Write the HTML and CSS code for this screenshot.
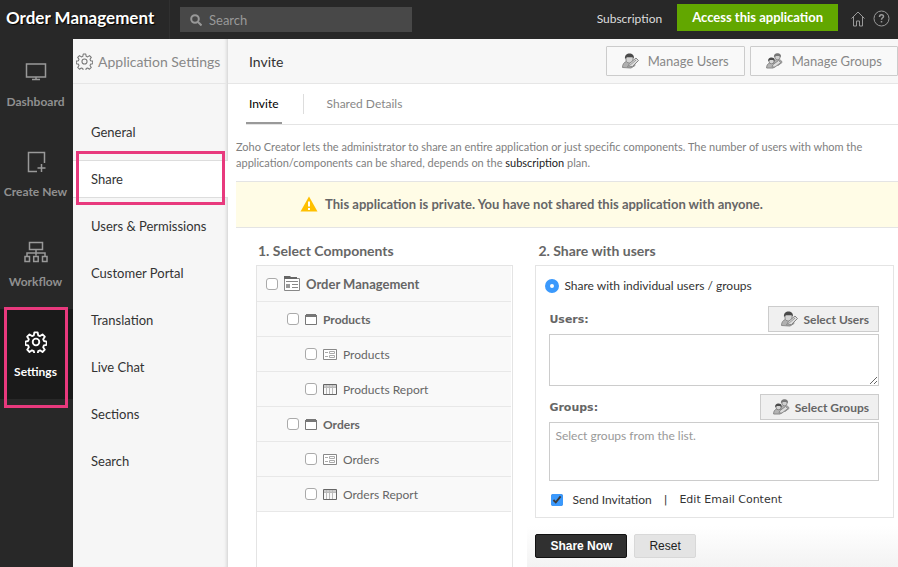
FILE: index.html
```html
<!DOCTYPE html>
<html lang="en">
<head>
<meta charset="utf-8">
<meta name="viewport" content="width=device-width, initial-scale=1">
<title>Order Management - Share</title>
<link rel="stylesheet" href="styles.css">
</head>
<body>
  <!-- icons used more than once -->
  <svg class="defs" aria-hidden="true">
    <symbol id="gear" viewBox="0 0 24 24">
      <circle cx="12" cy="12" r="3.6"/>
      <path d="M10.200 1.500h3.600l.6 3.200 2 .8 2.700-1.800 2.500 2.500-1.800 2.700.8 2 3 .6v3.600l-3 .6-.8 2 1.800 2.700-2.500 2.500-2.700-1.800-2 .8-.6 3h-3.600l-.6-3-2-.8-2.700 1.800-2.500-2.500 1.800-2.700-.8-2-3-.6v-3.600l3-.6.8-2-1.800-2.700 2.500-2.500 2.700 1.800 2-.8z" stroke-linejoin="round"/>
    </symbol>
    <symbol id="user" viewBox="0 0 17 16">
      <path d="M.5 14.500c0-3 1.500-5.500 4-6h5c2 .5 3.500 2 3.500 4l-4 2.500z" fill="#b0b0b0" stroke="#8c8c8c"/>
      <path d="M4 4h7v3c0 2-1.500 3-3.500 3S4 9 4 7z" fill="#d4d4d4" stroke="#8c8c8c"/>
      <path d="M3 6C2.500 2 5 .5 7.500.5S12.500 2 11.800 5.500L10.500 4H5z" fill="#4a4a4a"/>
      <path d="M5.500 14l2-3.500L14 5l2.500 2.500-6 6z" fill="#dcdcdc" stroke="#858585"/>
      <path d="M7 13l7-6" stroke="#999"/>
    </symbol>
    <symbol id="group" viewBox="0 0 17 16">
      <path d="M8 11c0-2.500 1-4.500 3-4.500s5 .5 5 3l-4 3z" fill="#b4b4b4" stroke="#909090"/>
      <circle cx="11.500" cy="4.200" r="2.600" fill="#cfcfcf" stroke="#909090"/>
      <path d="M8 4.500C7.500 1.500 9.500.3 11.500.3s4 1.200 3.500 4L13.500 3H9.500z" fill="#777"/>
      <path d="M.6 15c0-2.500 1-4.500 3-4.800h3.400c2 .3 2.500 1.800 2.500 3.300l-2.500 1.500z" fill="#b4b4b4" stroke="#888"/>
      <circle cx="5.500" cy="8.300" r="2.500" fill="#d4d4d4" stroke="#888"/>
      <path d="M2.200 8.500C1.800 5.500 3.500 4.500 5.500 4.500s3.700 1 3.300 3.800L7.500 7h-4z" fill="#4a4a4a"/>
      <path d="M6 14l1-2.500 5.500-4 2.500 2-6 4.500z" fill="#dcdcdc" stroke="#8a8a8a"/>
    </symbol>
    <symbol id="folder" viewBox="0 0 12 11">
      <path d="M.5 1.500h11v9H.5z" fill="#fff" stroke="#777"/>
      <path d="M1 0h10v1h1v2H0V1h1z" fill="#777"/>
    </symbol>
    <symbol id="form" viewBox="0 0 14 11">
      <path d="M.5.500h13v10H.5z" fill="#fff" stroke="#888"/>
      <path d="M2 3.500h3M2 7.500h3M6.500 2.500h5v2h-5zM6.500 6.500h5v2h-5z" fill="none" stroke="#aaa"/>
    </symbol>
    <symbol id="report" viewBox="0 0 14 11">
      <path d="M1 1h12v2H1z" fill="#ccc"/>
      <path d="M3.500 1v9M6.500 1v9M9.500 1v9M1 3.500h12" fill="none" stroke="#bbb"/>
      <path d="M.5.500h13v10H.5z" fill="none" stroke="#666"/>
    </symbol>
  </svg>

  <header class="topbar">
    <h1>Order Management</h1>
    <form class="search" role="search">
      <svg width="12" height="12" viewBox="0 0 12 12"><circle cx="5" cy="5" r="3.800"/><path d="M8 8l3.500 3.500"/></svg>
      <input type="search" placeholder="Search" aria-label="Search">
    </form>
    <nav class="top-links">
      <a class="subscription" href="#">Subscription</a>
      <a class="access" href="#">Access this application</a>
      <a class="icon-link" href="#" aria-label="Home"><svg width="14" height="16" viewBox="0 0 14 16"><path d="M.5 7.500L7 1l6.500 6.500M2.500 6v9H5.500v-5h3v5h3V6"/></svg></a>
      <a class="icon-link" href="#" aria-label="Help"><svg width="17" height="17" viewBox="0 0 17 17"><circle cx="8.500" cy="8.500" r="7.500"/><path d="M6.500 7c0-3 4-3 4-.6 0 1.300-2 1.600-2 3.300M8.500 11v1.500" stroke-width="1.500"/></svg></a>
    </nav>
  </header>

  <div class="page">
    <nav class="rail">
      <a href="#">
        <svg width="22" height="22" viewBox="0 0 22 22"><path d="M1.500 3h19v13h-19zM11 16v2.500M7 18.500h8"/></svg>
        Dashboard
      </a>
      <a href="#">
        <svg width="22" height="22" viewBox="0 0 22 22"><path d="M12 20.500H3.500v-19h16V12M16.500 13v8M12.500 17h8"/></svg>
        Create New
      </a>
      <a href="#">
        <svg width="24" height="22" viewBox="0 0 24 22"><path d="M5.500 1.500h13v7h-13zM12 8.500v6M3 15v-3h18v3M1 15.500h4.500v5H1zM9.700 15.500h4.500v5H9.700zM18.500 15.500H23v5h-4.500z"/></svg>
        Workflow
      </a>
      <a class="active" href="#">
        <svg width="22" height="22"><use href="#gear"/></svg>
        Settings
      </a>
    </nav>

    <aside class="settings">
      <h2><svg width="17" height="17"><use href="#gear"/></svg>Application Settings</h2>
      <ul>
        <li><a href="#">General</a></li>
        <li class="active"><a href="#">Share</a></li>
        <li><a href="#">Users &amp; Permissions</a></li>
        <li><a href="#">Customer Portal</a></li>
        <li><a href="#">Translation</a></li>
        <li><a href="#">Live Chat</a></li>
        <li><a href="#">Sections</a></li>
        <li><a href="#">Search</a></li>
      </ul>
    </aside>

    <main>
      <div class="main-head">
        <h2>Invite</h2>
        <button type="button"><svg width="17" height="16"><use href="#user"/></svg>Manage Users</button>
        <button type="button"><svg width="17" height="16"><use href="#group"/></svg>Manage Groups</button>
      </div>

      <nav class="tabs">
        <a class="active" href="#">Invite</a>
        <a href="#">Shared Details</a>
      </nav>

      <p class="intro">Zoho Creator lets the administrator to share an entire application or just specific components. The number of users with whom the application/components can be shared, depends on the <a href="#">subscription</a> plan.</p>

      <div class="notice">
        <svg width="18" height="16" viewBox="0 0 18 16"><path d="M9 .5L17.500 15.500H.5z" fill="#ffc000"/><path d="M9 5.500v5M9 12v2" stroke="#fff" stroke-width="2"/></svg>
        This application is private. You have not shared this application with anyone.
      </div>

      <div class="columns">
        <section class="components">
          <h3>1. Select Components</h3>
          <div class="tree">
            <label class="level-0">
              <input type="checkbox">
              <svg width="16" height="15" viewBox="0 0 16 15"><path d="M.5 2.500h15v12H.5z" fill="#fff" stroke="#888"/><path d="M0 0h6l1 1h6v2H0z" fill="#666"/><path d="M2 5.500h12M8 8.500h6M8 11.500h6" stroke="#888"/><path d="M2 8h4v4H2z" fill="#999"/></svg>
              Order Management
            </label>
            <label class="level-1"><input type="checkbox"><svg width="12" height="11"><use href="#folder"/></svg>Products</label>
            <label class="level-2"><input type="checkbox"><svg width="14" height="11"><use href="#form"/></svg>Products</label>
            <label class="level-2"><input type="checkbox"><svg width="14" height="11"><use href="#report"/></svg>Products Report</label>
            <label class="level-1"><input type="checkbox"><svg width="12" height="11"><use href="#folder"/></svg>Orders</label>
            <label class="level-2"><input type="checkbox"><svg width="14" height="11"><use href="#form"/></svg>Orders</label>
            <label class="level-2"><input type="checkbox"><svg width="14" height="11"><use href="#report"/></svg>Orders Report</label>
          </div>
        </section>

        <form class="share">
          <h3>2. Share with users</h3>
          <div class="share-box">
            <label class="radio"><input type="radio" name="target" checked>Share with individual users / groups</label>
            <div class="field">
              <label for="users">Users:</label>
              <button type="button"><svg width="17" height="16"><use href="#user"/></svg>Select Users</button>
            </div>
            <textarea id="users" class="users-text"></textarea>
            <div class="field">
              <label for="groups">Groups:</label>
              <button type="button"><svg width="17" height="16"><use href="#group"/></svg>Select Groups</button>
            </div>
            <textarea id="groups" class="groups-text" placeholder="Select groups from the list."></textarea>
            <div class="send">
              <label><input type="checkbox" checked>Send Invitation</label>
              <span>|</span>
              <a href="#">Edit Email Content</a>
            </div>
          </div>
          <div class="actions">
            <button class="share-now" type="submit">Share Now</button>
            <button class="reset" type="reset">Reset</button>
          </div>
        </form>
      </div>
    </main>
  </div>
</body>
</html>
```

FILE: styles.css
```css
* {
    box-sizing: border-box;
}

body {
    margin: 0;
    min-height: 100vh;
    display: flex;
    flex-direction: column;
    font-family: Lato, "Liberation Sans", sans-serif;
    font-size: 13px;
    color: #333;
    background: #fff;
}

h1, h2, h3, p, ul {
    margin: 0;
    padding: 0;
    font-weight: normal;
}

a {
    color: inherit;
    text-decoration: none;
}

button, input, textarea {
    font-family: inherit;
    margin: 0;
}

svg {
    flex: none;
}

.defs {
    display: none;
}

/* top bar */

.topbar {
    display: flex;
    align-items: center;
    height: 39px;
    background: #282828;
    color: #fff;
}

.topbar h1 {
    width: 170px;
    padding-left: 6px;
    padding-bottom: 3px;
    line-height: 36px;
    font-size: 17px;
    font-weight: bold;
    white-space: nowrap;
    text-shadow: 1px 1px 1px #000;
    border-right: 1px solid #303030;
}

.search {
    display: flex;
    align-items: center;
    gap: 7px;
    width: 232px;
    height: 25px;
    margin-left: 10px;
    padding-left: 10px;
    background: #484848;
}

.search svg {
    fill: none;
    stroke: #999;
    stroke-width: 2;
}

.search input {
    flex: 1;
    min-width: 0;
    padding: 0;
    border: none;
    background: none;
    font-size: 13px;
    color: #fff;
}

.search input::placeholder {
    color: #999;
}

.top-links {
    display: flex;
    align-items: center;
    margin-left: auto;
    padding-right: 8px;
    padding-bottom: 2px;
}

.subscription {
    margin-right: 15px;
    font-size: 12px;
    color: #ddd;
}

.access {
    margin-right: 13px;
    margin-bottom: 2px;
    padding: 0 15px;
    line-height: 27px;
    font-weight: bold;
    background: #62a700;
}

.icon-link {
    display: flex;
    margin-left: 8px;
}

.access + .icon-link {
    margin-left: 0;
}

.icon-link svg {
    fill: none;
    stroke: #999;
}

.page {
    flex: 1;
    display: flex;
}

/* left rail */

.rail {
    flex: none;
    width: 73px;
    background: #282828;
}

.rail a {
    position: relative;
    display: flex;
    flex-direction: column;
    align-items: center;
    gap: 11px;
    height: 90px;
    padding-top: 22px;
    padding-right: 2px;
    line-height: 16px;
    font-size: 12px;
    font-weight: bold;
    color: #909090;
    white-space: nowrap;
}

.rail svg {
    fill: none;
    stroke: #999;
    stroke-width: 1.5;
}

.rail .active {
    color: #fff;
    background: #1a1a1a;
}

.rail .active svg {
    stroke: #fff;
    stroke-width: 2;
}

.rail .active::after {
    content: "";
    position: absolute;
    top: -2px;
    right: 5px;
    bottom: -9px;
    left: 4px;
    border: 3px solid #e8397d;
}

/* application settings */

.settings {
    flex: none;
    width: 155px;
    background: #f6f6f6;
    border-right: 1px solid #ddd;
    box-shadow: inset -3px 0 3px -2px #ddd;
}

.settings h2 {
    display: flex;
    align-items: center;
    gap: 5px;
    height: 45px;
    padding-left: 3px;
    font-size: 14px;
    color: #888;
    white-space: nowrap;
    border-bottom: 1px solid #e6e6e6;
}

.settings h2 svg {
    fill: none;
    stroke: #777;
    stroke-width: 1.5;
}

.settings ul {
    display: flex;
    flex-direction: column;
    gap: 9px;
    padding-top: 29px;
    list-style: none;
}

.settings li {
    position: relative;
    padding-left: 18px;
    line-height: 36px;
    border: 1px solid transparent;
    border-width: 1px 0;
}

.settings .active {
    margin-right: -1px;
    background: #fff;
    border-color: #ddd;
}

.settings .active::after {
    content: "";
    position: absolute;
    top: -10px;
    right: 3px;
    bottom: -8px;
    left: 3px;
    border: 3px solid #e8397d;
    pointer-events: none;
}

/* main area */

main {
    flex: 1;
    min-width: 0;
    display: flex;
    flex-direction: column;
}

.main-head {
    display: flex;
    align-items: center;
    gap: 5px;
    height: 45px;
    padding-left: 21px;
    background: #f7f7f7;
    border-bottom: 1px solid #e6e6e6;
}

.main-head h2 {
    flex: 1;
    font-size: 14px;
}

.main-head button {
    display: flex;
    align-items: center;
    gap: 9px;
    height: 30px;
    padding: 0 15px;
    font-size: 13px;
    color: #888;
    background: #f9f9f9;
    border: 1px solid #ccc;
    border-radius: 1px;
}

.tabs {
    display: flex;
    align-items: center;
    height: 41px;
    margin-left: 18px;
    border-bottom: 1px solid #e4e4e4;
    font-size: 12px;
    color: #888;
}

.tabs a {
    padding: 2px 3px 0;
    line-height: 36px;
    border-bottom: 2px solid transparent;
}

.tabs .active {
    color: #000;
    border-bottom-color: #999;
}

.tabs a + a {
    margin-left: 21px;
    padding: 0 23px;
    line-height: 20px;
    border-bottom: none;
    border-left: 1px solid #ddd;
}

.intro {
    margin: 14px 30px 10px 8px;
    font-size: 11px;
    line-height: 16px;
    color: #808080;
}

.intro a {
    color: #222;
}

.notice {
    display: flex;
    align-items: center;
    justify-content: center;
    gap: 7px;
    height: 47px;
    margin-left: 8px;
    padding-right: 71px;
    padding-bottom: 1px;
    font-weight: bold;
    color: #666;
    background: #fffce6;
    border: 1px solid #e4e4e4;
    border-width: 1px 0;
}

.columns {
    flex: 1;
    display: flex;
    padding-left: 28px;
}

h3 {
    padding: 12px 2px 3px;
    line-height: 22px;
    font-size: 14px;
    font-weight: bold;
    color: #666;
}

.components {
    flex: 257;
    display: flex;
    flex-direction: column;
    margin-right: 14px;
}

.tree {
    flex: 1;
    padding-right: 1px;
    border: 1px solid #e4e4e4;
    border-bottom: none;
}

.tree label {
    display: flex;
    align-items: center;
    height: 35px;
    color: #666;
    background: #f9f9f9;
    border-bottom: 1px solid #e8e8e8;
    font-size: 12px;
}

.tree svg {
    margin: 0 6px;
}

.tree input {
    appearance: none;
    width: 12px;
    height: 12px;
    background: #fff;
    border: 1px solid #aaa;
    border-radius: 3px;
}

.tree .level-0 {
    height: 36px;
    padding-left: 9px;
    font-size: 13px;
    font-weight: bold;
}

.tree .level-1 {
    padding-left: 30px;
    font-weight: bold;
}

.tree .level-2 {
    padding-left: 48px;
}

/* share form */

.share {
    flex: 370;
    display: flex;
    flex-direction: column;
}

.share h3 {
    padding-left: 11px;
}

.share-box {
    margin: 0 4px 0 8px;
    padding: 12px 14px 8px 13px;
    border: 1px solid #e4e4e4;
}

.radio {
    display: flex;
    align-items: center;
    gap: 5px;
    margin-left: -4px;
    line-height: 16px;
    font-size: 12px;
}

.radio input {
    appearance: none;
    width: 14px;
    height: 14px;
    border: 5px solid #3b99fc;
    border-radius: 50%;
    background: #fff;
}

.field {
    display: flex;
    align-items: center;
    justify-content: space-between;
    margin-top: 8px;
    margin-bottom: 2px;
}

.radio + .field {
    margin-top: 12px;
}

.field label {
    font-family: "DejaVu Sans", sans-serif;
    font-size: 11px;
    font-weight: bold;
    color: #666;
}

.field button {
    display: flex;
    align-items: center;
    gap: 5px;
    height: 26px;
    padding: 0 9px 0 12px;
    font-size: 12px;
    font-weight: bold;
    color: #666;
    background: #f0f0f0;
    border: 1px solid #ccc;
}

textarea {
    display: block;
    width: 100%;
    padding: 5px;
    font-size: 12px;
    border: 1px solid #ccc;
}

textarea::placeholder {
    color: #999;
}

.users-text {
    height: 52px;
}

.groups-text {
    height: 59px;
    resize: none;
}

.send {
    display: flex;
    align-items: center;
    gap: 12px;
    margin-top: 10px;
    padding-left: 2px;
    line-height: 18px;
    font-size: 12px;
}

.send label {
    display: flex;
    align-items: center;
    gap: 9px;
}

.send input {
    width: 12px;
    height: 12px;
    accent-color: #3b99fc;
}

.send span, .send a {
    font-family: "DejaVu Sans", sans-serif;
    font-size: 11px;
}

.actions {
    flex: 1;
    display: flex;
    align-items: flex-start;
    gap: 7px;
    margin-top: 8px;
    padding: 8px;
    background: linear-gradient(#fff, #f3f3f3);
}

.actions button {
    height: 24px;
    padding: 0 14px;
    font-family: "Liberation Sans", sans-serif;
    font-size: 12px;
    border-radius: 2px;
}

.share-now {
    font-weight: bold;
    color: #fff;
    background: #303030;
    border: 1px solid #111;
}

.reset {
    color: #222;
    background: #e4e4e4;
    border: 1px solid #d8d8d8;
}
```
